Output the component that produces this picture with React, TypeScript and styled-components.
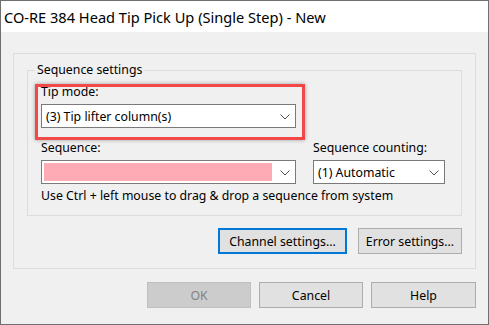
import * as React from "react";
import styled, { createGlobalStyle } from "styled-components";

const GlobalStyle = createGlobalStyle`
  html, body {
    margin: 0;
    padding: 0;
    background: #f0f0f0;
  }
  body {
    font-family: "Noto Sans", "Open Sans", sans-serif;
    font-size: 12.3px;
    color: #000;
  }
`

const Window = styled.div`
  box-sizing: border-box;
  width: 489px;
  height: 325px;
  border: 1px solid #6f6f6f;
  background: #f0f0f0;
  display: flex;
  flex-direction: column;
`

const TitleBar = styled.div`
  height: 31px;
  background: #fff;
  display: flex;
  align-items: center;
  padding-left: 3px;
  font-size: 14.6px;
  color: #000;
  white-space: nowrap;
`

const Body = styled.div`
  flex: 1;
  display: flex;
  flex-direction: column;
  padding: 21px 12px 15px 12px;
`

const Panel = styled.div`
  border: 1px solid #dcdcdc;
  padding: 8px 13px 14px 13px;
  display: flex;
  flex-direction: column;
`

const GroupBox = styled.fieldset`
  margin: 0;
  border: 1px solid #dcdcdc;
  padding: 6px 15px 11px 13px;
  min-width: 0;
`

const Legend = styled.legend`
  padding: 0 2px;
  margin-left: -6px;
  line-height: 16px;
`

const Field = styled.div<{ $width: number }>`
  position: relative;
  display: flex;
  flex-direction: column;
  width: ${p => p.$width}px;
`

const Label = styled.div`
  line-height: 16px;
  white-space: nowrap;
`

const Highlight = styled.div`
  position: absolute;
  left: -6px;
  top: 0;
  right: -9px;
  bottom: -12px;
  border: 3px solid #f24848;
  box-shadow: 0 0 4px rgba(0, 0, 0, 0.35);
  pointer-events: none;
`

const Combo = styled.div`
  box-sizing: border-box;
  height: 24px;
  margin-top: 4px;
  border: 1px solid #7a7a7a;
  background: #fff;
  display: flex;
  align-items: center;
  padding: 0 5px 0 4px;
  gap: 4px;
`

const ComboText = styled.div`
  flex: 1;
  white-space: nowrap;
  overflow: hidden;
`

const Swatch = styled.div`
  flex: 1;
  align-self: stretch;
  margin: 2px 4px 2px -2px;
  background: #ffabb5;
`

const Row = styled.div`
  display: flex;
  gap: 17px;
  margin-top: 12px;
`

const Hint = styled.div`
  margin-top: 4px;
  line-height: 16px;
  white-space: nowrap;
`

const ButtonRow = styled.div<{ $gap: number }>`
  display: flex;
  justify-content: flex-end;
  gap: ${p => p.$gap}px;
`

const Button = styled.button<{ $width: number; $focused?: boolean }>`
  box-sizing: border-box;
  width: ${p => p.$width}px;
  height: 26px;
  padding: 0;
  font-family: inherit;
  font-size: 12.3px;
  color: #000;
  background: #e1e1e1;
  border: ${p => (p.$focused ? "2px solid #0078d7" : "1px solid #adadad")};

  &:disabled {
    background: #cccccc;
    border-color: #bfbfbf;
    color: #838383;
  }
`

const Chevron = () => (
  <svg width="10" height="6" viewBox="0 0 10 6" style={{ flex: "none", marginTop: 1 }}>
    <polyline points="0.5,0.5 5,5 9.5,0.5" fill="none" stroke="#505050" strokeWidth="1" />
  </svg>
)

export default function App() {
  return (
    <>
      <GlobalStyle />
      <Window>
        <TitleBar>CO-RE 384 Head Tip Pick Up (Single Step) - New</TitleBar>
        <Body>
          <Panel>
            <GroupBox>
              <Legend>Sequence settings</Legend>
              <Field $width={255}>
                <Label>Tip mode:</Label>
                <Combo>
                  <ComboText>(3) Tip lifter column(s)</ComboText>
                  <Chevron />
                </Combo>
                <Highlight />
              </Field>
              <Row>
                <Field $width={255}>
                  <Label>Sequence:</Label>
                  <Combo>
                    <Swatch />
                    <Chevron />
                  </Combo>
                </Field>
                <Field $width={132}>
                  <Label>Sequence counting:</Label>
                  <Combo>
                    <ComboText>(1) Automatic</ComboText>
                    <Chevron />
                  </Combo>
                </Field>
              </Row>
              <Hint>Use Ctrl + left mouse to drag &amp; drop a sequence from system</Hint>
            </GroupBox>
            <ButtonRow $gap={11} style={{ marginTop: 12 }}>
              <Button $width={129} $focused>Channel settings...</Button>
              <Button $width={104}>Error settings...</Button>
            </ButtonRow>
          </Panel>
          <ButtonRow $gap={8} style={{ marginTop: 13 }}>
            <Button $width={104} disabled>OK</Button>
            <Button $width={104}>Cancel</Button>
            <Button $width={105}>Help</Button>
          </ButtonRow>
        </Body>
      </Window>
    </>
  );
}
